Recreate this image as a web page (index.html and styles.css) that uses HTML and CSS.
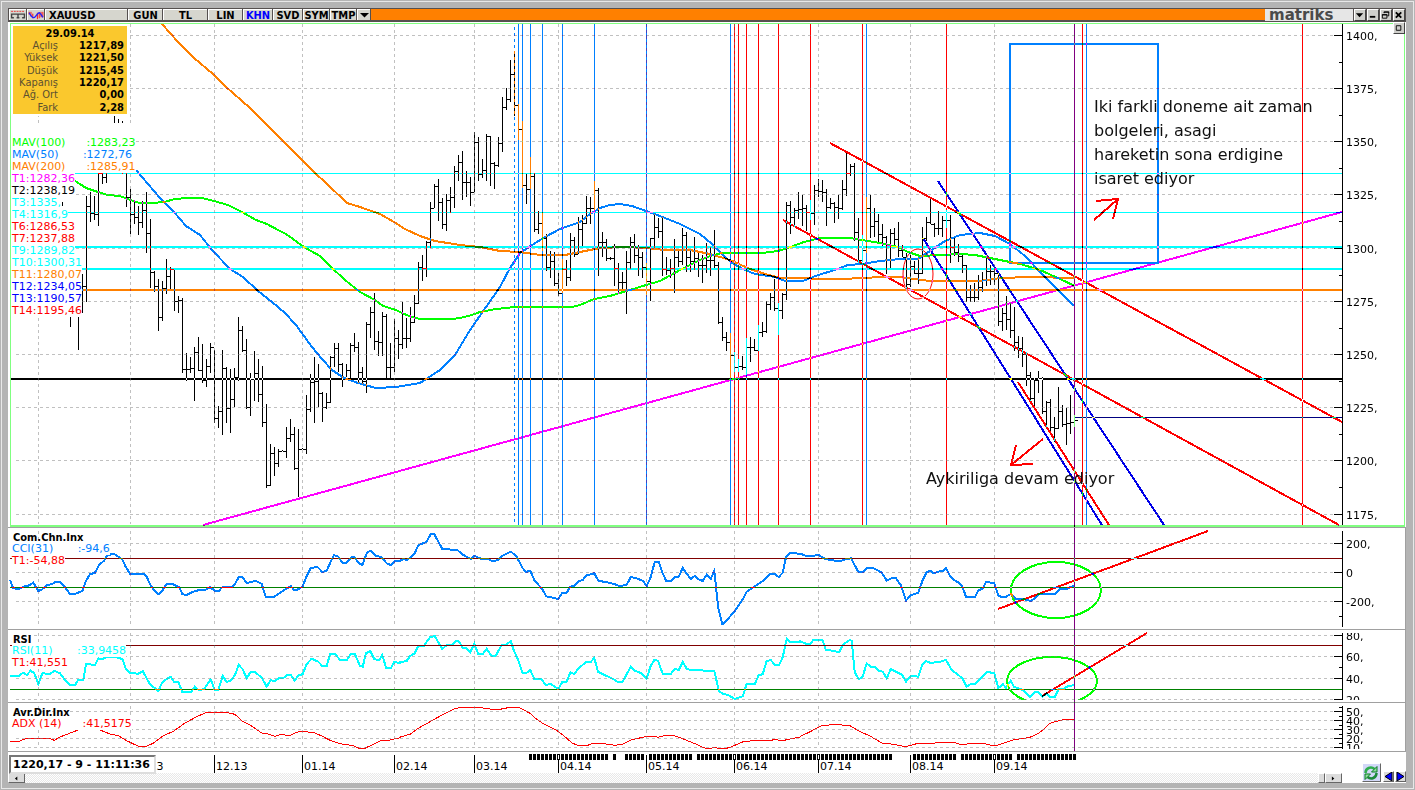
FILE: index.html
```html
<!DOCTYPE html>
<html lang="tr">
<head>
<meta charset="utf-8">
<title>XAUUSD - Matriks</title>
<link rel="stylesheet" href="styles.css">
</head>
<body>
<main class="window">
  <header class="toolbar">
    <button class="tool tool-icon" aria-label="Bar"><svg viewBox="0 0 17 12"><path d="M1 1.500h15" stroke="#e33" stroke-dasharray="2 1"/><path d="M1.500 9V4.500H15.500V9M8.500 4v5M1 8.500h3M7 8.500h3M13 8.500h3" stroke="#444" stroke-width="1.500" fill="none"/></svg></button>
    <button class="tool tool-icon" aria-label="Gösterge"><svg viewBox="0 0 17 12"><path d="M1 2v3M3 2v5M5 4v5M10 10V3M12 9V3M14 8V2M16 8V2" stroke="#f00"/><path d="M1 3q4 8 7 4t4-4 4 5" stroke="#22f" fill="none" stroke-width="1.500"/></svg></button>
    <button class="tool tool-symbol">XAUUSD</button>
    <button class="tool tool-gun">GUN</button>
    <button class="tool tool-tl">TL</button>
    <button class="tool tool-gun">LIN</button>
    <button class="tool tool-mid tool-on">KHN</button>
    <button class="tool tool-mid">SVD</button>
    <button class="tool tool-small">SYM</button>
    <button class="tool tool-small">TMP</button>
    <button class="tool tool-drop" aria-label="Menü"><svg viewBox="0 0 9 6"><path d="M0 1h9L4.500 5.500z"/></svg></button>
    <span class="brand">matriks</span>
    <button class="win-button" aria-label="Menü"><svg viewBox="0 0 11 10"><path d="M1 3h8L5 7.500z"/></svg></button>
    <button class="win-button" aria-label="Küçült"><svg viewBox="0 0 11 10"><path d="M2 6h6v2H2z"/></svg></button>
    <button class="win-button" aria-label="Geri yükle"><svg viewBox="0 0 11 10"><path d="M3.500 3V1.500H8.500V6H7M3 2h6M1.500 4.500h5v4h-5zM1 5h6" fill="none" stroke="#000"/></svg></button>
    <button class="win-button" aria-label="Kapat"><svg viewBox="0 0 11 10"><path d="M2 2l6 6M8 2l-6 6" stroke="#000" stroke-width="2"/></svg></button>
  </header>

  <section class="panel">
    <svg class="plot" id="price" viewBox="8 22 1398 505" role="img" aria-label="XAUUSD fiyat grafiği">
      <path class="frame-line" d="M10.500 526V23.500H1404.500V526"/>
      <path class="frame-line frame-line-base" d="M10 526H1405"/>
      <g class="grid"></g>
      <g class="pens">
        <path class="pen pen-cyan" d="M11 173.500H1342M11 212.500H1342"/>
        <path class="pen pen-cyan thick" d="M11 247H1342M11 269H1342"/>
        <path class="pen pen-orange thick" d="M11 290H1342"/>
        <path class="pen pen-black thick" d="M11 379H1342"/>
        <path class="pen pen-navy" d="M1075 417.500H1342"/>
        <path class="pen pen-blue dashed" d="M514.500 27V525"/>
        <path class="pen pen-blue" d="M518.500 24V525M522.500 24V525M530.500 24V525M542.500 24V525M562.500 24V525M594.500 24V525M646.500 24V525M730.500 24V525M866.500 24V525M1086.500 24V525"/>
        <path class="pen pen-red" d="M734.500 24V525M738.500 24V525M746.500 24V525M758.500 24V525M778.500 24V525M810.500 24V525M862.500 24V525M946.500 24V525M1082.500 24V525M1302.500 24V525"/>
        <path class="pen pen-purple" d="M1074.500 24V527"/>
        <path class="pen pen-blue thick" d="M1010 44H1158V263H1010Z"/>
        <path class="pen pen-magenta thick" d="M203 525L1342 212"/>
        <path class="pen pen-red thick" d="M830 143L1342 422"/>
        <path class="pen pen-red thick" d="M783 220L1339 525"/>
        <path class="pen pen-red thick" d="M1018 382L1109 525"/>
        <path class="pen pen-deep thick" d="M923 238L1102 525"/>
        <path class="pen pen-deep thick" d="M938 181L1164 525"/>
        <path class="pen pen-red thick" d="M1094 220L1118 199M1096 201L1118 199L1113 219"/>
        <path class="pen pen-red thick" d="M1043 439L1011 465M1016 445L1011 465L1033 464"/>
        <ellipse class="pen pen-red smooth" cx="918" cy="274" rx="15" ry="25"/>
      </g>
      <text class="note" x="1094" y="112">Iki farkli doneme ait zaman</text>
      <text class="note" x="1094" y="136">bolgeleri, asagi</text>
      <text class="note" x="1094" y="160">hareketin sona erdigine</text>
      <text class="note" x="1094" y="184">isaret ediyor</text>
      <text class="note" x="926" y="484">Aykiriliga devam ediyor</text>
    </svg>
    <div class="overlay overlay-price">
      <table class="quote">
        <caption>29.09.14</caption>
        <tbody>
          <tr><th>Açılış</th><td>1217,89</td></tr>
          <tr><th>Yüksek</th><td>1221,50</td></tr>
          <tr><th>Düşük</th><td>1215,45</td></tr>
          <tr><th>Kapanış</th><td>1220,17</td></tr>
          <tr><th>Ağ. Ort</th><td>0,00</td></tr>
          <tr><th>Fark</th><td>2,28</td></tr>
        </tbody>
      </table>
      <div class="averages">
        <p class="green">MAV(100)      :1283,23</p>
        <p class="blue">MAV(50)       :1272,76</p>
        <p class="orange">MAV(200)      :1285,91</p>
      </div>
      <p class="magenta">T1:1282,36</p>
      <p class="black">T2:1238,19</p>
      <p class="cyan">T3:1335,</p>
      <p class="cyan">T4:1316,9</p>
      <p class="red">T6:1286,53</p>
      <p class="red">T7:1237,88</p>
      <p class="cyan">T9:1289,82</p>
      <p class="cyan">T10:1300,31</p>
      <p class="orange">T11:1280,07</p>
      <p class="deep">T12:1234,05</p>
      <p class="deep">T13:1190,57</p>
      <p class="red">T14:1195,46</p>
    </div>
    <button class="win-button panel-button" aria-label="Büyüt"><svg viewBox="0 0 11 10"><path d="M2.500 2.500h5v5h-5z" fill="none" stroke="#000"/></svg></button>
  </section>

  <section class="panel">
    <svg class="plot" id="cci" viewBox="8 527 1398 102" role="img" aria-label="Com.Chn.Inx">
      <path class="divider" d="M8 527.500H1405.500V629"/>
      <g class="grid"></g>
      <g class="pens">
        <path class="pen pen-maroon" d="M10 558.500H1342"/>
        <path class="pen pen-forest" d="M10 587.500H1342"/>
        <path class="pen pen-purple" d="M1074.500 528V629"/>
        <ellipse class="pen pen-green thick" cx="1056" cy="590" rx="45" ry="28"/>
        <path class="pen pen-red thick" d="M998 609L1208 531"/>
      </g>
    </svg>
    <div class="overlay">
      <h2>Com.Chn.Inx</h2>
      <p class="blue">CCI(31)       :-94,6</p>
      <p class="red">T1:-54,88</p>
    </div>
  </section>

  <section class="panel">
    <svg class="plot" id="rsi" viewBox="8 629 1398 73" role="img" aria-label="RSI">
      <clipPath id="rsi-area"><path d="M8 633H1400V700H8z"/></clipPath>
      <path class="divider" d="M8 629.500H1405.500V702"/>
      <g class="grid"></g>
      <g class="pens">
        <path class="pen pen-maroon" d="M10 645.500H1342"/>
        <path class="pen pen-forest" d="M10 689.500H1342"/>
        <path class="pen pen-purple" d="M1074.500 629V702"/>
        <ellipse class="pen pen-green thick" cx="1052" cy="681" rx="45" ry="24" clip-path="url(#rsi-area)"/>
        <path class="pen pen-red thick" d="M1042 696L1147 633"/>
      </g>
    </svg>
    <div class="overlay">
      <h2>RSI</h2>
      <p class="cyan">RSI(11)       :33,9458</p>
      <p class="red">T1:41,551</p>
    </div>
  </section>

  <section class="panel">
    <svg class="plot" id="adx" viewBox="8 702 1398 49" role="img" aria-label="Avr.Dir.Inx">
      <path class="divider" d="M8 702.500H1405.500V751"/>
      <g class="grid"></g>
      <g class="pens"><path class="pen pen-purple" d="M1074.500 702V751"/></g>
    </svg>
    <div class="overlay">
      <h2>Avr.Dir.Inx</h2>
      <p class="red">ADX (14)      :41,5175</p>
    </div>
  </section>

  <footer class="panel">
    <svg class="plot" id="time" viewBox="8 751 1398 22" role="img" aria-label="Tarih ekseni">
      <path class="divider" d="M8 751.500H1406"/>
      <path class="sessions" d="M529 757H608M613 757H616M625 757H644M649 757H692M697 757H892M913 757H956M961 757H1012M1017 757H1076"/>
    </svg>
    <output class="status">1220,17 - 9 - 11:11:36</output>
    <div class="scroll">
      <button class="scroll-button" aria-label="Sola"><svg viewBox="0 0 16 10"><path d="M9 3v5L6 5.500z"/></svg></button>
      <span class="track"></span>
      <button class="thumb" aria-label="Kaydır"></button>
      <button class="scroll-button" aria-label="Sağa"><svg viewBox="0 0 16 10"><path d="M6 3v5l3-2.500z"/></svg></button>
    </div>
    <div class="nav">
      <button class="nav-refresh" aria-label="Yenile"><svg viewBox="0 0 16 16"><path d="M2.500 8C2.500 3 8 1 11.500 4" fill="none" stroke="#2fae4e" stroke-width="2.500"/><path d="M8.500 7H14V1.500z" fill="#8fe09a" stroke="#087a25"/><path d="M13.500 8C13.500 13 8 15 4.500 12" fill="none" stroke="#1c8a3a" stroke-width="2.500"/><path d="M7.500 9H2V14.500z" fill="#8fe09a" stroke="#087a25"/></svg></button>
      <button class="nav-step" aria-label="Geri"><svg viewBox="0 0 9 9"><path d="M8 0v9L1 4.500z"/></svg></button>
      <button class="nav-step" aria-label="İleri"><svg viewBox="0 0 9 9"><path d="M1 0v9l7-4.500z"/></svg></button>
    </div>
  </footer>
</main>
<script src="chart.js"></script>
</body>
</html>
```
FILE: styles.css
```css
* { box-sizing: border-box; }

body {
  margin: 0;
  background: #b4b4b4;
  font: 11px/12px "DejaVu Sans", Verdana, sans-serif;
  color: #000;
}

p, h2 { margin: 0; }
button { margin: 0; padding: 0; border: 0; font: inherit; color: inherit; }
svg { display: block; }

.window {
  min-height: 100vh;
  border: solid #b4b4b4;
  border-width: 8px 9px 7px 8px;
  background: #fff;
  outline: 1px solid #e8e8e8;
  outline-offset: -2px;
}

/* Toolbar */
.toolbar {
  display: flex;
  height: 14px;
  padding: 1px;
  gap: 1px;
  background: #55504f;
  font: bold 11px/12px "DejaVu Sans Condensed", Tahoma, sans-serif;
}
.toolbar::before { content: ""; order: 1; flex: 1; height: 11px; background: #ff8000; }
.tool {
  height: 11px;
  border-top: 1px solid #fff;
  border-left: 1px solid #fff;
  background: #d6d6ce;
  line-height: 11px;
  text-align: center;
}
.tool-icon { width: 17px; }
.tool-icon svg { width: 16px; height: 11px; }
.tool-symbol { width: 82px; padding-left: 3px; text-align: left; }
.tool-gun { width: 34px; }
.tool-tl { width: 44px; }
.tool-mid { width: 29px; }
.tool-small { width: 26px; }
.tool-on { color: #00f; }
.tool-drop { width: 13px; display: grid; place-items: center; }
.tool-drop svg { width: 9px; height: 6px; }
.brand {
  order: 2;
  width: 88px;
  height: 12px;
  margin-left: -1px;
  padding-left: 4px;
  background: #e6e6e6;
  color: #4a4a4a;
  font: bold 15px/12px "DejaVu Sans", Verdana, sans-serif;
}
.win-button {
  order: 2;
  width: 12px;
  height: 12px;
  border: 1px solid;
  border-color: #fff #444 #444 #fff;
  background: #cfcfcb;
}
.win-button svg { width: 10px; height: 10px; }

/* Chart panels */
.panel { position: relative; }
.plot { width: 100%; height: auto; background: #fff; isolation: isolate; }
.grid { shape-rendering: crispEdges; fill: none; stroke: #c0c0c0; stroke-dasharray: 3 3; }
.frame-line { fill: none; stroke: #80ff80; shape-rendering: crispEdges; }
.frame-line-base { stroke-width: 2px; }
.divider { fill: none; stroke: #a0a0a0; shape-rendering: crispEdges; }
.axis { fill: none; stroke: #000; shape-rendering: crispEdges; }
.axis-label { font: 11px "DejaVu Sans", Verdana, sans-serif; }
.note { font: 16px "DejaVu Sans", Verdana, sans-serif; fill: #101010; }
.sessions { stroke: #000; stroke-width: 6px; stroke-dasharray: 3 1; shape-rendering: crispEdges; }
.session-gap { stroke: #fff; shape-rendering: crispEdges; }

/* Inverting pens: each stroke colour is the complement of what shows on white */
.pen { fill: none; stroke-width: 1px; mix-blend-mode: difference; shape-rendering: crispEdges; }
.thick { stroke-width: 2px; }
.smooth { shape-rendering: auto; }
.dashed { stroke-dasharray: 3 3; }
.pen-black { stroke: #ffffff; }
.pen-red { stroke: #00ffff; }
.pen-cyan { stroke: #ff0000; }
.pen-green { stroke: #ff00ff; }
.pen-blue { stroke: #ff7f00; }
.pen-deep { stroke: #ffff17; }
.pen-navy { stroke: #ffff7f; }
.pen-orange { stroke: #007fff; }
.pen-magenta { stroke: #00ff00; }
.pen-purple { stroke: #7fff7f; }
.pen-maroon { stroke: #7fffff; }
.pen-forest { stroke: #ff7fff; }

/* Legends */
.overlay { position: absolute; left: 4px; top: 5px; display: flex; flex-direction: column; align-items: flex-start; }
.overlay p { background: #fff; white-space: pre; }
.overlay h2 { padding-left: 1px; margin-bottom: -1px; font: bold 11px/12px "DejaVu Sans Condensed", Tahoma, sans-serif; }
.overlay-price { left: 3px; top: 2px; }
.overlay-price p { padding-left: 1px; }
.averages { margin-top: 9px; padding-top: 12px; background: #fff; }
.green { color: #0f0; }
.blue { color: #0080ff; }
.orange { color: #ff8000; }
.magenta { color: #f0f; }
.cyan { color: #0ff; }
.red { color: #f00; }
.deep { color: #00f; }

.quote {
  width: 118px;
  height: 92px;
  border: 2px solid #fff;
  border-collapse: separate;
  border-spacing: 0;
  background: #fac82d;
  font: 11px/12px "DejaVu Sans Condensed", Tahoma, sans-serif;
}
.quote caption { margin-bottom: -16px; padding-top: 4px; position: relative; font-weight: bold; }
.quote tbody::before { content: ""; display: table-row; height: 13px; }
.quote th, .quote td { height: 12px; padding: 0 3px 0 0; text-align: right; }
.quote th { width: 48px; font-weight: normal; color: #5c5030; }
.quote td { font-weight: bold; }

.panel-button { position: absolute; top: 0; right: 1px; }

/* Bottom strip */
.status {
  position: absolute;
  left: 1px;
  top: 4px;
  min-width: 147px;
  padding: 1px 2px;
  border: 2px solid;
  border-color: #777 #ddd #ddd #777;
  background: #fff;
  font: bold 11px/13px "DejaVu Sans", Verdana, sans-serif;
  white-space: nowrap;
}
.scroll { display: flex; height: 10px; margin-right: 64px; }
.track { flex: 1; background: repeating-conic-gradient(#e8e8e8 0 25%, #fff 0 50%) 0 0 / 2px 2px; }
.scroll-button, .thumb, .nav button {
  border: 1px solid;
  border-color: #fff #666 #666 #fff;
  background: #dcdcdc;
}
.scroll-button { width: 17px; }
.scroll-button svg { width: 15px; height: 8px; }
.thumb { width: 7px; }
.nav { position: absolute; right: 0; bottom: 1px; display: flex; align-items: flex-end; gap: 1px; }
.nav .nav-refresh { width: 19px; height: 19px; margin-right: 1px; background: #d3d8f8; }
.nav-refresh svg { width: 16px; height: 16px; }
.nav-step { width: 11px; height: 11px; }
.nav-step svg { width: 9px; height: 9px; fill: #00f; stroke: #000; stroke-width: 1px; }
```
FILE: chart.js
```js
const NS = "http://www.w3.org/2000/svg";
const UNIT = 3; // readings are stored in thirds of a drawing unit

function add(parent, tag, attrs, text) {
  const el = document.createElementNS(NS, tag);
  for (const key in attrs) el.setAttribute(key, attrs[key]);
  if (text) el.textContent = text;
  parent.appendChild(el);
  return el;
}

const months = [38, 130, 214, 302, 394, 474, 558, 646, 734, 818, 910, 994];

function scale(id, top, bottom, majors, minors) {
  const svg = document.getElementById(id);
  let grid = "";
  let axis = `M1342.5 ${top}V${bottom}`;
  for (const x of months) grid += `M${x + 0.5} ${top}V${bottom - 1}`;
  for (const [y, label] of majors) {
    grid += `M16 ${y + 0.5}H1334`;
    axis += `M1334 ${y + 0.5}H1342`;
    add(svg, "text", { class: "axis-label", x: 1346, y: y + 5, "clip-path": `url(#${id}-clip)` }, label);
  }
  for (const y of minors) axis += `M1339 ${y + 0.5}H1342`;
  const clip = add(svg, "clipPath", { id: `${id}-clip` });
  add(clip, "path", { d: `M1300 ${top}H1406V${bottom}H1300z` });
  add(svg.querySelector(".grid"), "path", { d: grid });
  add(svg, "path", { class: "axis", d: axis });
}

scale("price", 24, 525,
  [[35, "1400,"], [88, "1375,"], [141, "1350,"], [194, "1325,"], [248, "1300,"], [301, "1275,"], [354, "1250,"], [407, "1225,"], [460, "1200,"], [514, "1175,"]],
  [62, 115, 168, 221, 275, 328, 381, 434, 487]);
scale("cci", 531, 627, [[543, "200,"], [572, "0"], [601, "-200,"]], [616]);
scale("rsi", 633, 700, [[635, "80,"], [656, "60,"], [678, "40,"], [699, "20,"]], [667]);
scale("adx", 706, 749, [[711, "50,"], [720, "40,"], [729, "30,"], [738, "20,"], [747, "10,"]], [707, 716, 725, 734, 743]);

// Price bars: every run holds high, low and close in turn, one bar every 4 units
function run(x, originY, values) {
  let d = "";
  for (let i = 0; i < values.length; i += 3, x += 4) {
    const [high, low, close] = values.slice(i, i + 3).map(v => Math.round(originY + v / UNIT));
    if (low > high) d += `M${x + 0.5} ${high}V${low}M${x + 1} ${close + 0.5}h3`;
  }
  return d;
}

const bars =
  "M70.5 315V327M78.5 315V350M62.5 202V206M114.5 116V123M118.5 119V123M122.5 121V123" +
  run(82, 160, [343,458,377, 108,425,138, 97,185,160, 108,180,162, 33,197,40, 33,73,50, 33,70,34]) +
  "M122.5 171V174" +
  run(126, 160, [33,140,112, 88,222,163, 120,192,172, 138,225,187, 123,203,150, 97,280,220, 178,383,337, 333,395,377,
    358,512,470, 362,482,385, 298,402,347, 320,387,328, 330,452,423, 408,458,420, 415,638,627, 580,664,628,
    590,638,625, 560,722,577, 532,634,630, 553,670,660, 598,680,617, 550,640,562, 570,788,775, 737,803,754,
    570,824,625, 622,790,745, 627,818,716, 625,740,650, 470,662,510, 497,575,570, 538,748,740, 640,768,655,
    572,722,638, 597,725,703, 617,800,785, 733,983,976, 853,978,880, 862,947,910, 866,922,872, 870,874,872,
    800,895,835, 778,845,823, 800,930,925, 808,1010,866, 864,868,866, 706,881,747, 643,757,665, 592,790,663,
    613,740,698, 695,785,740, 700,748,725, 588,728,592, 550,620,565, 550,637,613, 610,680,655, 613,652,630,
    550,655,556, 520,575,560, 545,670,637, 622,672,662, 485,700,493, 440,535,455, 400,570,542, 512,587,545,
    455,587,468, 463,655,622, 550,655,622, 478,637,535, 510,597,553, 427,567,533, 475,563,533]) +
  run(410, 20, [862,965,905, 825,908,848, 725,853,742, 705,782,745, 663,770,667, 547,685,565, 493,563,498, 478,602,545,
    535,627,613, 522,632,541, 500,580,530, 437,565,452, 405,482,427, 393,540,487, 453,530,485, 470,557,515,
    335,515,365, 350,482,463, 417,473,450, 342,482,347, 347,497,430, 427,507,436, 350,442,370, 232,395,262,
    205,270,236, 120,247,162, 94,288,256, 253,360,328, 303,505,495, 462,552,508, 411,508,468, 460,637,627,
    573,643,610, 575,692,655, 642,752,740, 692,773,722, 695,797,790, 760,827,820, 718,820,747, 720,797,772,
    640,783,660, 650,710,703, 592,703,628, 585,678,608, 527,613,565, 532,613,565, 483,570,510, 503,767,667,
    637,710,665, 657,722,715, 710,720,715, 672,797,745, 730,822,787, 755,808,787, 693,882,727, 652,747,667,
    643,730,705, 675,767,710, 697,775,740, 728,825,783, 655,843,655, 583,687,620, 595,653,632, 592,767,747,
    712,765,750, 716,773,745, 657,820,710, 692,740,724, 625,735,645, 637,757,710, 690,757,723, 650,750,713,
    700,770,735, 705,788,735, 668,758,720]) +
  run(710, 140, [320,408,360, 270,385,375, 367,552,547, 530,602,590, 577,633,607, 580,720,645, 635,697,682, 657,697,677,
    648,690,682, 595,710,620, 592,665,620, 597,632,630, 555,632,577, 545,590,572, 483,580,493, 460,510,470,
    418,513,505, 490,585,511, 458,537,463, 186,480,196, 182,282,230, 205,260,210, 157,237,207, 165,258,203,
    195,272,215, 180,240,220, 135,255,150, 117,170,153, 120,185,155, 148,258,200, 173,207,188, 187,250,200,
    165,237,203, 120,210,147, 38,168,98, 72,107,78, 70,303,277, 235,370,360, 285,365,330, 170,340,203,
    165,293,257, 205,290,243, 222,305,283, 253,317,290, 288,402,315, 267,385,278, 265,315,298, 245,350,330,
    315,352,350, 340,447,432, 345,440,378, 362,402,400, 355,433,398, 260,403,293, 232,302,245, 178,252,252,
    250,292,265, 212,285,265, 228,290,240, 210,265,240, 225,370,322, 293,347,335, 312,365,347, 345,398,375,
    375,485,472, 435,487,472, 430,485,470, 405,480,440, 397,455,420, 345,437,392, 375,435,393, 385,435,400,
    400,558,542, 505,572,520, 468,570,537, 490,595,570]) +
  run(1014, 320, [-40,93,67, 48,115,85, 50,140,103, 95,197,165, 155,243,235, 175,257,180, 153,220,178, 172,282,272,
    243,320,247, 237,333,322, 290,365,325, 202,328,272, 255,320,312, 263,375,310, 225,342,307, 285,322,300]);

function curve(id, pen, points) {
  const group = document.getElementById(id).querySelector(".pens");
  add(group, "polyline", { class: `pen ${pen}`, points });
}

curve("price", "pen-green thick", "60,172 75,181 80,184 86,188 98,192 108,195 120,196 130,200 140,203 152,203 164,202 175,199 188,198 202,198 214,201 228,205 242,212 256,220 267,224 278,230 286,234 304,247 320,256 330,266 345,280 360,292 375,300 383,306 396,310 404,314 412,317 420,319 452,319 460,318 472,315 480,312 496,309 515,307 540,307 572,307 580,305 594,299 610,296 630,290 646,285 660,281 680,270 700,260 710,256 722,253 762,253 778,251 788,248 804,242 820,238 850,238 862,240 880,243 898,247 908,252 920,256 960,254 975,255 1000,260 1020,264 1040,270 1060,279 1075,286");
curve("price", "pen-blue thick", "136,170 148,184 160,198 174,212 186,226 200,235 212,250 230,269 243,277 258,291 272,302 285,313 296,325 312,347 322,359 332,370 344,378 358,383 376,388 396,387 420,383 440,370 455,355 470,330 486,307 500,287 510,268 520,253 532,245 545,237 560,229 580,222 590,214 600,208 610,205 620,204 632,206 646,211 660,216 680,224 700,234 712,244 722,254 732,263 745,270 755,274 775,277 785,281 803,281 818,275 835,270 848,265 862,264 880,261 900,259 918,259 930,251 945,241 960,235 980,233 995,236 1010,244 1025,256 1040,272 1058,290 1074,306");
curve("price", "pen-orange thick", "162,24 178,42 194,58 213,74 225,86 250,108 266,124 282,140 302,160 315,173 325,182 347,203 360,207 380,214 394,222 405,229 420,236 435,241 460,245 480,247 500,251 520,252 540,255 565,255 580,252 600,248 625,247 646,248 665,250 690,250 710,254 730,260 750,269 765,274 780,278 840,279 865,278 880,277 900,277 930,281 980,281 1000,278 1030,277 1075,278");
add(document.querySelector("#price .pens"), "path", { class: "pen pen-black", d: bars });

// Indicator readings come in three stretches, each with its own left edge
function indicator(id, pen, stretches) {
  const points = [];
  for (const [left, text] of stretches)
    for (const pair of text.split(" ")) {
      const [x, y] = pair.split(",").map(Number);
      points.push(`${(left + x / UNIT).toFixed(1)},${(500 + y / UNIT).toFixed(1)}`);
    }
  curve(id, pen, points.join(" "));
}

indicator("cci", "pen-blue thick", [
  [0, "30,240 40,265 57,267 70,260 85,257 100,248 115,273 127,268 140,255 155,253 165,246 180,246 192,258 210,282 225,282 247,273 258,242 270,223 285,218 297,195 312,182 322,166 342,161 355,170 366,177 378,202 390,221 410,223 430,221 440,230 450,253 460,268 475,283 488,270 500,252 517,252 538,262 547,282 558,286 575,277 595,271 615,270 630,262 645,272 657,272 668,260 697,260 705,252 717,230 728,232 740,249 755,246 767,242 785,252 797,290 822,291 835,282 850,272 872,258 883,270 897,268 908,258 920,228 932,205 952,200 967,216 980,212 990,190 1002,165 1015,170 1027,188 1040,188 1055,172 1063,170 1075,188 1087,195 1100,160 1111,152 1127,167 1145,172 1160,190 1172,195 1185,184 1200,184"],
  [400, "0,182 10,177 20,180 32,172 44,160 55,136 80,125 92,102 103,102 115,125 127,147 172,150 187,163 212,177 223,167 242,176 265,178 280,184 293,180 305,168 333,155 350,170 367,203 378,216 391,212 403,240 427,268 439,289 475,297 487,279 500,278 511,260 523,257 535,244 548,240 560,226 583,220 595,242 620,247 640,251 660,259 680,254 692,232 704,233 728,242 740,258 752,232 764,186 776,186 788,220 799,243 812,243 824,232 836,230 848,204 860,221 872,237 884,228 896,238 908,243 920,224 932,237 943,212 955,325 967,373 979,362 1003,335 1028,298 1040,275 1088,243 1110,222 1125,222 1136,231 1148,218 1158,172 1170,159 1200,161"],
  [800, "0,161 20,168 40,168 55,164 75,177 105,182 125,182 140,177 153,175 175,215 190,215 200,204 220,204 245,218 260,242 275,235 288,235 302,255 318,302 332,286 355,278 368,240 380,217 390,212 402,220 414,215 428,213 438,204 450,228 462,240 474,247 486,257 498,290 525,291 535,271 548,266 558,246 583,249 595,286 605,291 618,290 632,282 648,297 672,298 693,303 705,295 715,283 765,282 778,268 800,267 812,260 823,258"]
]);
indicator("rsi", "pen-cyan thick", [
  [0, "30,527 57,527 70,518 80,525 92,512 103,520 115,552 127,520 150,522 163,512 180,520 195,540 210,555 225,555 235,540 250,540 258,492 285,495 295,475 307,478 320,470 345,470 360,475 368,478 378,508 390,519 415,521 428,513 450,553 475,573 487,547 500,537 512,530 523,547 535,545 547,577 573,577 584,560 596,570 612,568 632,538 644,570 655,570 668,528 680,546 692,542 705,525 716,495 728,508 740,535 752,515 765,516 785,533 800,560 812,541 824,543 836,535 850,534 860,526 872,525 884,542 896,525 908,523 920,492 935,476 955,485 967,498 980,498 990,463 1005,461 1020,480 1040,480 1052,463 1065,463 1080,498 1088,500 1098,460 1111,453 1123,478 1138,480 1147,465 1158,503 1173,503 1183,486 1200,489"],
  [400, "0,487 20,483 30,468 44,460 55,437 72,437 90,412 104,408 127,447 140,435 155,435 168,422 178,425 187,443 200,445 211,457 223,431 235,462 248,462 260,446 274,467 287,467 305,435 318,435 332,423 343,455 355,480 367,518 380,518 391,510 403,537 425,538 437,555 452,552 475,567 487,546 500,545 511,517 523,522 535,505 558,487 573,485 583,474 594,515 620,528 640,537 652,545 668,545 692,500 704,512 725,520 740,535 752,498 763,480 774,482 788,521 812,522 824,507 836,510 848,486 860,506 872,510 943,513 957,573 970,582 985,585 1004,597 1028,589 1040,552 1064,553 1076,525 1088,523 1100,483 1112,480 1125,495 1137,495 1148,472 1160,417 1170,426 1200,425"],
  [800, "0,424 20,432 30,432 40,420 67,420 78,450 100,452 117,457 130,433 150,420 155,422 164,517 177,538 188,530 200,490 212,500 225,502 235,512 248,515 260,535 272,507 295,519 306,524 318,545 332,527 355,530 367,495 378,483 390,488 415,487 438,480 455,510 475,525 487,535 500,560 512,552 525,553 548,530 560,516 583,519 595,565 608,552 618,563 632,542 642,560 668,570 690,592 705,577 715,576 728,590 740,580 750,591 765,590 776,567 790,568 800,560 823,555"]
]);
indicator("adx", "pen-red", [
  [0, "30,724 57,724 75,717 100,716 150,716 163,721 180,711 240,688 268,680 295,688 330,702 355,707 380,722 405,734 422,741 440,738 460,730 490,707 520,694 555,669 590,650 615,639 650,636 697,640 710,647 725,662 750,675 785,699 805,702 825,709 840,704 870,706 890,697 905,693 945,699 965,708 990,721 1020,731 1060,737 1080,746 1095,745 1115,735 1145,721 1170,720 1200,713"],
  [400, "0,711 30,703 55,685 90,665 130,643 160,628 180,622 235,622 275,628 300,628 330,622 357,622 390,640 410,658 430,671 465,688 490,706 515,728 535,737 560,737 580,730 610,731 645,736 670,732 690,721 735,710 760,709 775,712 795,706 820,706 845,715 885,731 910,743 925,746 940,743 975,746 990,742 1030,725 1060,722 1110,722 1125,718 1145,723 1165,718 1200,711"],
  [800, "0,709 25,698 62,678 80,676 100,673 150,677 175,692 210,708 245,729 280,733 315,740 350,731 400,730 415,727 460,727 480,733 550,730 575,736 590,736 640,720 690,712 715,700 733,687 750,670 765,665 790,659 823,658"]
]);

const time = document.getElementById("time");
["", "11.13", "12.13", "01.14", "02.14", "03.14", "04.14", "05.14", "06.14", "07.14", "08.14", "09.14"].forEach((label, i) => {
  const x = months[i];
  add(time, "path", { class: "axis", d: `M${x + 0.5} 755V773` });
  if ([558, 734, 818, 994].includes(x)) add(time, "path", { class: "session-gap", d: `M${x + 0.5} 755V759` });
  if (label) add(time, "text", { class: "axis-label", x: x + 2, y: 770 }, label);
});
```
